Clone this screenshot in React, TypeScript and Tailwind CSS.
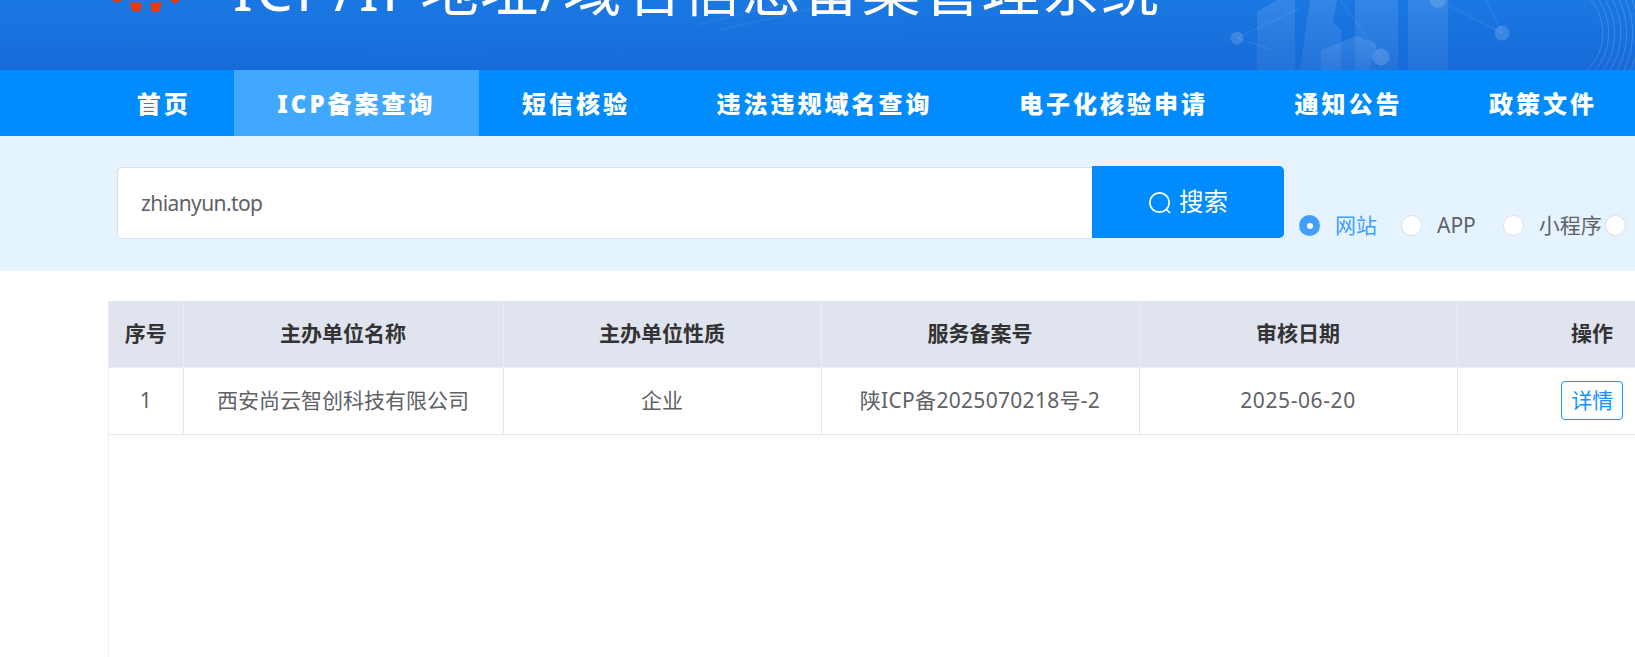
import React from "react";

const nav = ["首页", "ICP备案查询", "短信核验", "违法违规域名查询", "电子化核验申请", "通知公告", "政策文件"];
const radios = ["网站", "APP", "小程序"];
const heads = ["序号", "主办单位名称", "主办单位性质", "服务备案号", "审核日期", "操作"];
const cells = [
  { text: "1", cls: "" },
  { text: "西安尚云智创科技有限公司", cls: "" },
  { text: "企业", cls: "" },
  { text: "陕ICP备2025070218号-2", cls: "tracking-[0.3px]" },
  { text: "2025-06-20", cls: "tracking-[0.6px]" },
];

function HeaderArt() {
  const cx = 1530;
  const cy = 33;
  return (
    <svg className="absolute inset-0 h-[70px] w-[1635px]" viewBox="0 0 1635 70" fill="none">
      <defs>
        <linearGradient id="bld" x1="0" y1="0" x2="0" y2="1">
          <stop offset="0" stopColor="#ffffff" stopOpacity="0.11" />
          <stop offset="1" stopColor="#ffffff" stopOpacity="0.05" />
        </linearGradient>
      </defs>
      {[0, 1, 2, 3, 4, 5, 6, 7, 8, 9].map((i) => (
        <path
          key={i}
          d={`M0 ${66 - i * 6} C 250 ${38 - i * 3}, 520 ${76 - i * 5}, 900 ${34 - i * 4}`}
          stroke="#ffffff"
          strokeOpacity="0.012"
          strokeWidth="2"
        />
      ))}
      <path d="M720 30L850 0M700 24L800 0" stroke="#ffffff" strokeOpacity="0.05" strokeWidth="2" />
      <g fill="url(#bld)">
        <path d="M1257 70V12l20-12h18v70z" />
        <path d="M1310 0h27l-4 22 8 8v40h-41z" />
        <path d="M1355 0h43v70h-43z" />
        <path d="M1408 0h40v70h-40z" />
        <path d="M1321 50l36-14 20 8-8 26h-48z" />
      </g>
      <g stroke="#ffffff" strokeOpacity="0.1">
        <path d="M1237 38L1300 8M1237 38L1272 50M1340 0L1381 57M1448 5L1502 33M1486 0L1502 33" />
      </g>
      <g fill="#ffffff" fillOpacity="0.15">
        <circle cx="1237" cy="38" r="6.5" />
        <circle cx="1381" cy="57" r="8.5" />
        <circle cx="1502" cy="33" r="7.5" />
        <circle cx="1438" cy="0" r="8" />
      </g>
      {[52, 58, 64, 70, 76, 82, 88, 94, 100].map((r) => (
        <path
          key={r}
          d={`M${cx + 10} ${cy - r} A${r} ${r} 0 0 1 ${cx + 30} ${cy + r}`}
          stroke="#ffffff"
          strokeOpacity="0.16"
        />
      ))}
    </svg>
  );
}

export default function App() {
  return (
    <div className="h-[657px] w-[1635px] overflow-hidden bg-white font-['Noto_Sans','Noto_Sans_CJK_SC',sans-serif]">
      <header className="relative h-[70px] overflow-hidden bg-gradient-to-b from-[#1a78e2] to-[#176bd8]">
        <HeaderArt />
        <svg className="absolute left-[108px] top-0 h-[14px] w-[72px]" viewBox="0 0 72 14">
          <polygon points="4,0 14,0 9,3" fill="#e83a0c" />
          <polygon points="22,2 34,3 32,12 24,11" fill="#e83a0c" />
          <polygon points="42,3 54,2 51,12 44,12" fill="#e83a0c" />
          <polygon points="62,0 72,0 67,4" fill="#e83a0c" />
        </svg>
        <div className="relative mt-[-42px] pl-[233px] text-[58.5px] leading-[60px] tracking-[1.3px] text-white whitespace-nowrap">
          <span className="tracking-[3px]">ICP/IP</span>地址/域名信息备案管理系统
        </div>
      </header>

      <nav className="flex h-[66px] bg-[#008cff] pl-[93.5px]">
        {nav.map((n, i) => (
          <a
            key={n}
            className={`flex items-center px-[43.25px] pt-[1px] text-[24px] font-black tracking-[3px] text-white whitespace-nowrap ${i === 1 ? "bg-[#40a9ff]" : ""}`}
          >
            {n}
          </a>
        ))}
      </nav>

      <section className="flex h-[135px] items-start bg-[#e5f3ff] pl-[117px] pt-[30px]">
        <div className="mt-[1px] flex h-[72px] w-[975px] items-center rounded-l-[5px] border border-r-0 border-[#dcdfe6] bg-white pl-[23px] pt-[2px] text-[21px] tracking-[-0.6px] text-[#606266]">
          zhianyun.top
        </div>
        <button className="flex h-[72px] w-[192px] items-center justify-center gap-[7px] rounded-r-[5px] bg-[#008cff] pt-[1px] text-[24.5px] text-white">
          <svg width="24" height="24" viewBox="0 0 24 24" fill="none" stroke="#fff" strokeWidth="1.7">
            <circle cx="11.5" cy="11.5" r="9.7" />
            <path d="M18.5 18.5l3.5 3.5" />
          </svg>
          搜索
        </button>
        <div className="ml-[15px] mt-[44px] flex items-center text-[21px] text-[#606266]">
          {radios.map((r, i) => (
            <label key={r} className="flex items-center">
              {i === 0 ? (
                <span className="flex h-[21px] w-[21px] items-center justify-center rounded-full bg-[#409eff]">
                  <span className="h-[6px] w-[6px] rounded-full bg-white" />
                </span>
              ) : (
                <span className="h-[21px] w-[21px] rounded-full border border-[#dcdfe6] bg-white" />
              )}
              <span className={`pl-[15px] ${i === 0 ? "text-[#409eff] pr-[24px]" : i === 1 ? "pr-[27px]" : "pr-[3px]"}`}>{r}</span>
            </label>
          ))}
          <span className="h-[21px] w-[21px] rounded-full border border-[#dcdfe6] bg-white" />
        </div>
      </section>

      <div className="ml-[108px] mt-[30px] h-[356px] border-l border-[#ebeef5]">
        <table className="w-[1618px] table-fixed border-collapse">
          <colgroup>
            <col className="w-[74px]" />
            <col className="w-[320px]" />
            <col className="w-[318px]" />
            <col className="w-[318px]" />
            <col className="w-[318px]" />
            <col className="w-[270px]" />
          </colgroup>
          <thead>
            <tr className="h-[66px] bg-[#e0e4ef]">
              {heads.map((h) => (
                <th key={h} className="border-x border-b border-[#ebeef5] first:border-l-0 p-0 text-center text-[21px] font-bold text-[#333]">
                  {h}
                </th>
              ))}
            </tr>
          </thead>
          <tbody>
            <tr className="h-[67px]">
              {cells.map((c) => (
                <td key={c.text} className={`border-x border-b border-[#e4e7ed] first:border-l-0 p-0 text-center text-[21px] text-[#606266] ${c.cls}`}>
                  {c.text}
                </td>
              ))}
              <td className="border-b border-[#e4e7ed] p-0 text-center">
                <button className="h-[39px] w-[62px] rounded-[4px] border border-[#1890ff] text-[21px] text-[#1890ff]">详情</button>
              </td>
            </tr>
          </tbody>
        </table>
      </div>
    </div>
  );
}
